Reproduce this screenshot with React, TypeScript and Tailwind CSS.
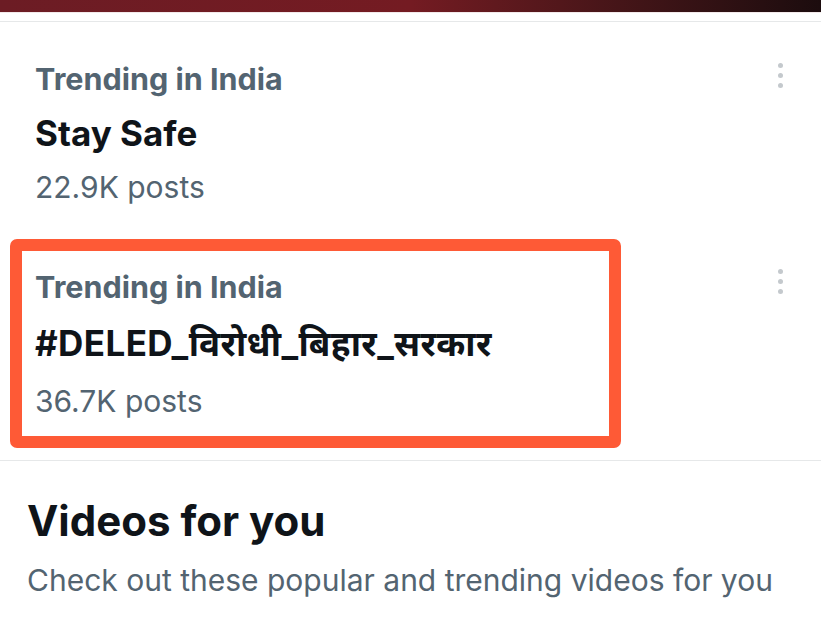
import React from "react";

const font = { fontFamily: "Inter, 'Noto Sans', sans-serif" };

const Dots = () => (
  <div className="flex flex-col gap-[5px] pt-[4px]">
    <span className="block h-[5px] w-[5px] rounded-full bg-[#c4c9cd]" />
    <span className="block h-[5px] w-[5px] rounded-full bg-[#c4c9cd]" />
    <span className="block h-[5px] w-[5px] rounded-full bg-[#c4c9cd]" />
  </div>
);

export default function App() {
  return (
    <div className="h-[618px] w-[821px] overflow-hidden bg-white" style={font}>
      <div className="h-[12px] bg-gradient-to-r from-[#6c1c24] via-[#741b22] to-[#1c0c0e]" />
      <div className="h-[9px] border-t border-[#f3e9ea]" />
      <div className="h-px bg-[#e6e8e9]" />

      {/* Trend 1 */}
      <div className="flex justify-between pl-[35px] pr-[38px] pt-[30px]">
        <div className="flex flex-col">
          <span className="text-[30.5px] font-bold leading-[54px] text-[#536471]">Trending in India</span>
          <span className="text-[35px] font-bold leading-[54px] text-[#0f1419]">Stay Safe</span>
          <span className="text-[30px] leading-[54px] text-[#536471]">22.9K posts</span>
        </div>
        <div className="pt-[7px]">
          <Dots />
        </div>
      </div>

      {/* Trend 2, highlighted */}
      <div className="mt-[25px] flex justify-between pl-[10px] pr-[38px]">
        <div className="h-[209px] w-[611px] rounded-[7px] border-[12px] border-[#fe5a36] pl-[13px] pt-[9px]">
          <div className="flex flex-col">
            <span className="text-[30.5px] font-bold leading-[54px] text-[#536471]">Trending in India</span>
            <span className="text-[35px] font-bold leading-[58px] tracking-[0.4px] text-[#0f1419]">#DELED_विरोधी_बिहार_सरकार</span>
            <span className="text-[30px] leading-[58px] text-[#536471]">36.7K posts</span>
          </div>
        </div>
        <div className="pt-[26px]">
          <Dots />
        </div>
      </div>

      <div className="mt-[12px] h-px bg-[#e6e8e9]" />

      {/* Videos */}
      <div className="pl-[27px] pt-[32px]">
        <div className="text-[42px] font-bold leading-[56px] text-[#0f1419]">Videos for you</div>
        <div className="mt-[11px] text-[30px] leading-[40px] text-[#536471]">Check out these popular and trending videos for you</div>
      </div>
    </div>
  );
}
